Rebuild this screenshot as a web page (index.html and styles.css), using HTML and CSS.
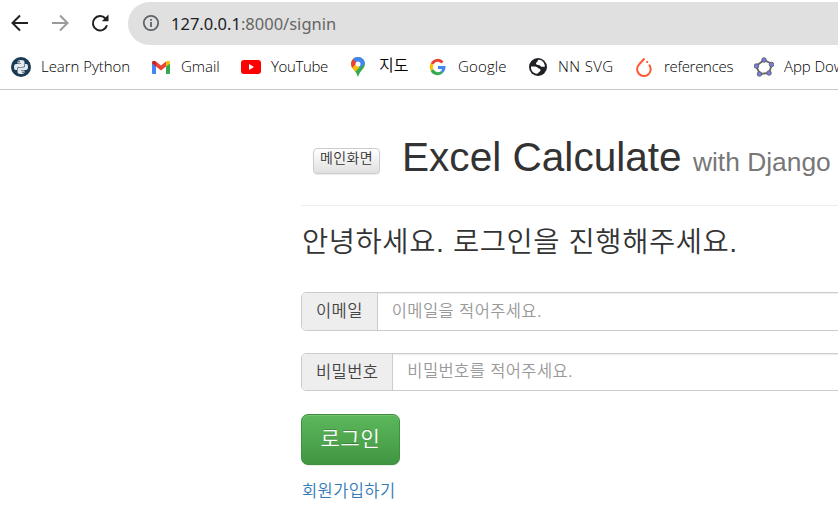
FILE: index.html
```html
<!DOCTYPE html>
<html lang="ko">
<head>
<meta charset="utf-8">
<title>Excel Calculate</title>
<link rel="stylesheet" href="styles.css">
</head>
<body>
<header class="browser">
  <div class="toolbar">
    <svg class="nav" viewBox="0 0 20 20"><path d="M18 10H3M10 2.500 2.500 10l7.500 7.500"/></svg>
    <svg class="nav off" viewBox="0 0 20 20"><path d="M2 10h15M10 2.500l7.500 7.500-7.500 7.500"/></svg>
    <svg class="nav" viewBox="0 0 20 20"><path d="M17 12.300A7.200 7.200 0 1 1 15.500 5.500"/><path class="solid" d="M18.500 1.500v6.700h-6.700z"/></svg>
    <div class="address">
      <svg class="info" viewBox="0 0 18 18"><circle cx="9" cy="9" r="7.200"/><path d="M9 8v5M9 5v1.800"/></svg>
      <span class="url">127.0.0.1<span>:8000/signin</span></span>
    </div>
  </div>
  <nav class="bookmarks">
    <a class="bm python"><svg viewBox="0 0 20 20"><circle cx="10" cy="10" r="10" fill="#193b55"/><path fill="#e5e9ec" d="M6.500 6.500V5q0-2 3.500-2t3.500 2v3q0 2-2 2H8q-2 0-2 2v1H4.500Q3 13 3 10t2-3h5v-.6zM13.500 13.500V15q0 2-3.500 2t-3.500-2v-3q0-1.500 2-1.500H12q2 0 2-2V7h1.500Q17 7 17 10t-2 3h-5v.5z"/><circle cx="8" cy="4.800" r=".8" fill="#193b55"/><circle cx="12" cy="15.200" r=".8" fill="#193b55"/></svg><span>Learn Python</span></a>
    <a class="bm gmail"><svg viewBox="0 0 20 20"><path fill="#4285f4" d="M1 6l4 3v8H2q-1 0-1-1z"/><path fill="#34a853" d="M15 9l4-3v10q0 1-1 1h-3z"/><path fill="#ea4335" d="M5 4.500l5 4 5-4v5l-5 4-5-4z"/><path fill="#c5221f" d="M1 5.500Q1.200 2.500 5 4.500v5L1 6.500z"/><path fill="#fbbc04" d="M19 5.500q-.2-3-4-1v5l4-3z"/></svg><span>Gmail</span></a>
    <a class="bm youtube"><svg viewBox="0 0 20 20"><rect y="3" width="20" height="14" rx="3" fill="#f00"/><path fill="#fff" d="M8 7v6l5-3z"/></svg><span>YouTube</span></a>
    <a class="bm maps"><svg viewBox="0 0 20 20"><defs><clipPath id="pin"><path d="M8 20Q7 16 4 13 1 10 1 7a7 7 0 0 1 14 0q0 3-3 6-3 3-4 7z"/></clipPath></defs><g clip-path="url(#pin)"><path fill="#34a853" d="M0 0h20v20H0z"/><path fill="#fbbc04" d="M0 8l8-2 3 3-8 8H0z"/><path fill="#ea4335" d="M0 0h5l3 5-6 6H0z"/><path fill="#4285f4" d="M5 0h12v4l-7 7-3-5-4-4z"/></g><circle cx="8" cy="7" r="2.500" fill="#fff"/></svg><span>지도</span></a>
    <a class="bm google"><svg viewBox="0 0 20 20" fill="none" stroke-width="3"><path stroke="#ea4335" d="M3 7a6.300 6.300 0 0 1 10.500-1.500"/><path stroke="#fbbc04" d="M3 7a7 7 0 0 0 0 6"/><path stroke="#34a853" d="M3 13a6.300 6.300 0 0 0 10 2"/><path stroke="#4285f4" d="M13 15q2-2 2-4.500H9"/></svg><span>Google</span></a>
    <a class="bm globe"><svg viewBox="0 0 20 20"><circle cx="9" cy="10" r="9" fill="#202124"/><path fill="#fff" d="M2 9.500c3 0 5-.5 6.500 1 1 1.500 2.800.8 3 2.500.1 1.800-1.800 1.500-2.500 3.500-4 1-7.500-3-7-7zM9 3c1.500-.5 3.500.2 5 1.800 1.200 1.400 2 3.200 1.800 5.200-1.800-.8-3.300.5-4.300-1C10.500 7.500 7 8.500 7 6.500 7 5 8.500 5.500 9 3z"/></svg><span>NN SVG</span></a>
    <a class="bm torch"><svg viewBox="0 0 20 20"><path fill="none" stroke="#ff5733" stroke-width="2" d="M9.500 1.500 4 7.500a6.800 6.800 0 1 0 10 .2"/><circle cx="12.200" cy="5" r="1.100" fill="#ee4c2c"/></svg><span>references</span></a>
    <a class="bm geo"><svg viewBox="0 0 20 20"><path fill="none" stroke="#666" stroke-width="1.800" d="M10 3l8 4-3 9-9 1-4-8z"/><g fill="#7c7ce0" stroke="#555" stroke-width=".8"><circle cx="10" cy="3" r="2.300"/><circle cx="17.500" cy="7.500" r="2.300"/><circle cx="15" cy="16" r="2.300"/><circle cx="5.500" cy="17" r="2.300"/><circle cx="2.500" cy="9" r="2.300"/></g></svg><span>App Dow</span></a>
  </nav>
</header>
<main class="container">
  <div class="page-header">
    <a class="btn-main">메인화면</a>
    <h1>Excel Calculate <small>with Django</small></h1>
  </div>
  <h2>안녕하세요. 로그인을 진행해주세요.</h2>
  <form>
    <div class="group"><label class="addon" for="email">이메일</label><input id="email" type="text" placeholder="이메일을 적어주세요."></div>
    <div class="group second"><label class="addon" for="pw">비밀번호</label><input id="pw" type="password" placeholder="비밀번호를 적어주세요."></div>
    <button class="login" type="button">로그인</button>
  </form>
  <a class="join">회원가입하기</a>
</main>
</body>
</html>
```
FILE: styles.css
```css
* { box-sizing: border-box; }
html, body { height: 508px; overflow: hidden; }
body {
  margin: 0;
  background: #fff;
  color: #333;
  font-family: "Liberation Sans", "Noto Sans CJK KR", sans-serif;
  font-weight: 350;
}
.browser { height: 90px; border-bottom: 1px solid #c8c8c8; font-family: "Open Sans", "Noto Sans CJK KR", sans-serif; }
.toolbar { display: flex; align-items: center; height: 47px; padding: 0 0 1px 10px; }
.nav { width: 20px; height: 20px; margin-right: 20px; fill: none; stroke: #202124; stroke-width: 2; }
.nav.off { stroke: #9a9a9a; }
.nav + .nav + .nav { margin-right: 17px; }
.nav .solid { fill: #202124; stroke: none; }
.address { display: flex; align-items: center; flex: 1; height: 43px; margin-left: 1px; padding-left: 14px; border-radius: 22px 0 0 22px; background: #e0e0e0; }
.info { width: 18px; height: 18px; margin-right: 11px; fill: none; stroke: #5f6368; stroke-width: 1.8; }
.url { font: 400 16.5px "Noto Sans", sans-serif; color: #202124; }
.url span { color: #666; }
.bookmarks { display: flex; height: 42px; padding-left: 11px; overflow: hidden; }
.bm { display: flex; flex: none; align-items: center; padding-bottom: 3px; gap: 10px; color: #000; font-size: 15px; font-weight: 350; letter-spacing: -.05px; white-space: nowrap; }
.bm span { margin-top: -1px; line-height: 20px; }
.bm svg { width: 20px; height: 20px; flex: none; }
.python { width: 140px; }
.gmail { width: 90px; }
.youtube { width: 109px; }
.youtube span { letter-spacing: -.35px; }
.maps { width: 79px; gap: 9px; font-size: 16px; }
.maps span { margin-top: -3px; }
.google { width: 100px; gap: 9px; letter-spacing: .15px; }
.globe { width: 106px; gap: 9px; letter-spacing: .4px; }
.torch { width: 119px; gap: 9px; letter-spacing: -.3px; }
.container { width: 537px; margin-left: 301px; overflow: hidden; }
.page-header { display: flex; height: 116px; padding-left: 12px; border-bottom: 1px solid #eee; }
.btn-main { flex: none; width: 67px; height: 26px; margin: 58px 22px 0 0; border: 1px solid #ccc; border-radius: 4px; background: linear-gradient(#fff, #e0e0e0); box-shadow: 0 1px 1px rgba(0,0,0,.08); text-align: center; font-size: 14px; letter-spacing: .4px; line-height: 19px; }
h1 { margin: 42px 0 0; font-size: 40.6px; font-weight: 400; line-height: 50px; white-space: nowrap; }
h1 small { font-size: 65%; color: #777; }
h2 { margin: 17px 0 0; height: 39px; padding-left: 1px; font-size: 28.5px; font-weight: 350; line-height: 39px; letter-spacing: .57px; white-space: nowrap; }
.group { display: flex; width: 700px; height: 39px; margin-top: 30px; border: 1px solid #ccc; border-radius: 5px; overflow: hidden; }
.group.second { height: 38px; margin-top: 22px; }
.addon { padding: 0 14px; border-right: 1px solid #ccc; background: #eee; color: #444; font-size: 16.5px; line-height: 36px; letter-spacing: .4px; white-space: nowrap; }
input { flex: 1; border: 0; padding: 0 14px 1px; background: #fff; box-shadow: inset 0 1px 1px rgba(0,0,0,.075); font: inherit; font-size: 16.5px; letter-spacing: .4px; }
input::placeholder { color: #999; }
.login { display: block; width: 99px; height: 51px; margin-top: 23px; padding: 0 0 5px; border: 1px solid #3e8f3e; border-radius: 7px; background: linear-gradient(#5cb85c, #419641); box-shadow: inset 0 1px 0 rgba(255,255,255,.15), 0 1px 1px rgba(0,0,0,.08); color: #fff; font: inherit; font-size: 21px; letter-spacing: .7px; text-shadow: 0 -1px 0 rgba(0,0,0,.2); }
.join { display: block; margin-top: 14px; padding-left: 1px; color: #337ab7; font-size: 16.5px; line-height: 24px; letter-spacing: .4px; }
```
